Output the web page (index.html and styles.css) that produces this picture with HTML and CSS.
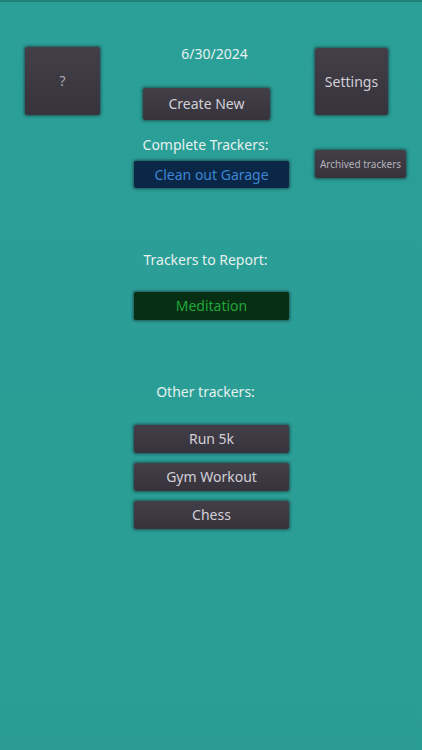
FILE: index.html
```html
<!DOCTYPE html>
<html>
<head>
<meta charset="utf-8">
<link rel="stylesheet" href="styles.css">
</head>
<body>
<div class="screen">
  <div class="side side-left">
    <button class="btn btn-square">?</button>
  </div>
  <div class="center">
    <div class="date">6/30/2024</div>
    <button class="btn btn-create">Create New</button>
    <div class="label label-first">Complete Trackers:</div>
    <button class="btn btn-item btn-complete">Clean out Garage</button>
    <div class="label label-section">Trackers to Report:</div>
    <button class="btn btn-item btn-report">Meditation</button>
    <div class="label label-section">Other trackers:</div>
    <div class="other-list">
      <button class="btn btn-item">Run 5k</button>
      <button class="btn btn-item">Gym Workout</button>
      <button class="btn btn-item">Chess</button>
    </div>
  </div>
  <div class="side side-right">
    <button class="btn btn-square btn-settings">Settings</button>
    <button class="btn btn-archived">Archived trackers</button>
  </div>
</div>
</body>
</html>
```

FILE: styles.css
```css
html, body {
  margin: 0;
  padding: 0;
}
body {
  background: #2a9e96;
  font-family: "Noto Sans", "Open Sans", sans-serif;
  font-size: 14px;
  line-height: 20px;
  color: #e6f1ef;
}
.screen {
  box-sizing: border-box;
  height: 750px;
  border-top: 2px solid #1f837b;
  display: flex;
  align-items: flex-start;
  padding-left: 25px;
  background: linear-gradient(#2ba098, #2a9c94);
}
.btn {
  font-family: inherit;
  font-size: 14px;
  line-height: 20px;
  color: #d2d0d6;
  background: linear-gradient(#433f49, #37333d);
  border: none;
  border-radius: 2px;
  box-shadow: 0 0 3px 1px rgba(20, 20, 28, 0.55);
  padding: 0;
  margin: 0;
  display: flex;
  align-items: center;
  justify-content: center;
}
.side-left {
  width: 75px;
  margin-top: 45px;
}
.btn-square {
  width: 75px;
  height: 68px;
  color: #a9a7ad;
}
.center {
  width: 155px;
  margin-left: 34px;
  display: flex;
  flex-direction: column;
  align-items: center;
}
.date {
  margin-top: 42px;
  margin-left: 6px;
}
.btn-create {
  margin-top: 24px;
  margin-right: 10px;
  width: 127px;
  height: 32px;
}
.label {
  margin-right: 12px;
}
.label-first {
  margin-top: 15px;
}
.label-section {
  margin-top: 62px;
}
.btn-item {
  width: 155px;
  height: 28px;
}
.btn-complete {
  margin-top: 6px;
  height: 27px;
  background: #0a2747;
  color: #3c86d4;
}
.btn-report {
  margin-top: 22px;
  background: #062f13;
  color: #23a63c;
}
.other-list {
  margin-top: 23px;
  display: flex;
  flex-direction: column;
  gap: 10px;
}
.side-right {
  margin-left: 26px;
  margin-top: 46px;
  width: 91px;
  display: flex;
  flex-direction: column;
  align-items: flex-start;
  gap: 35px;
}
.btn-settings {
  width: 73px;
  height: 67px;
  color: #d2d0d6;
}
.btn-archived {
  width: 91px;
  height: 28px;
  font-size: 10px;
  color: #b4b2b8;
}
```
